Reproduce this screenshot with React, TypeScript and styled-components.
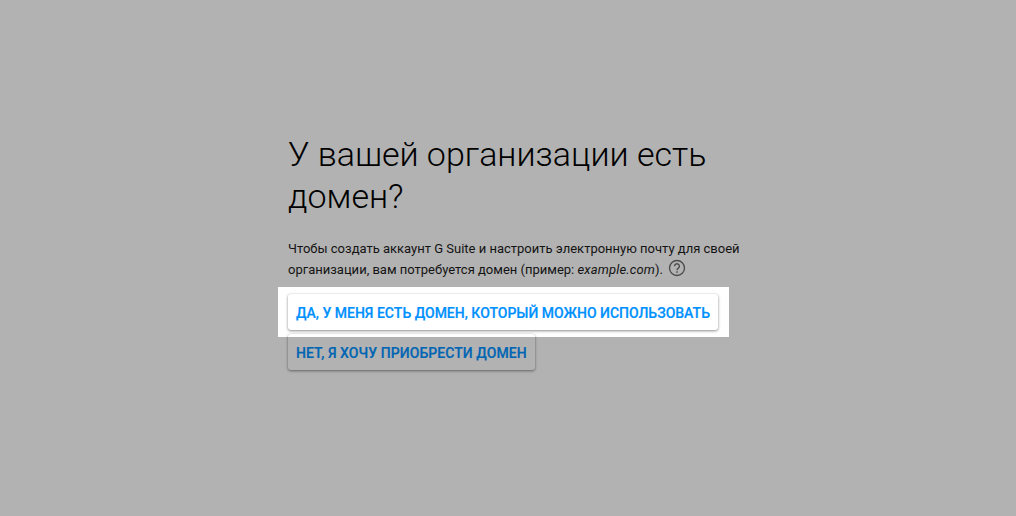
import React from "react";
import styled, { createGlobalStyle } from "styled-components";

const GlobalStyle = createGlobalStyle`
  html, body {
    margin: 0;
    padding: 0;
    background: #fff;
    overflow: hidden;
  }
  body {
    font-family: Roboto, "Liberation Sans", sans-serif;
  }
`;

const Page = styled.div`
  position: relative;
  width: 1016px;
  height: 516px;
  overflow: hidden;
  box-sizing: border-box;
  padding: 133px 0 0 288px;
`;

const Content = styled.main`
  width: 470px;
`;

const Title = styled.h1`
  margin: 0 0 21px;
  font-size: 34px;
  line-height: 42px;
  font-weight: 300;
  color: #000;
`;

const Description = styled.p`
  margin: 0 0 14px;
  font-size: 13px;
  line-height: 21px;
  font-weight: 400;
  color: #1c1c1c;

  em {
    font-style: italic;
    letter-spacing: 0.15px;
  }
`;

const DescriptionLine = styled.span`
  display: flex;
  align-items: center;
  height: 21px;
  white-space: pre;
`;

const HelpIcon = styled.svg`
  width: 18px;
  height: 18px;
  margin-left: 5px;
  margin-top: -4px;
  color: #6e6e6e;
`;

const Actions = styled.div`
  display: flex;
  flex-direction: column;
  align-items: flex-start;
  gap: 4px;
`;

const Highlighted = styled.div`
  position: relative;
`;

// hole in the dimmed layer, the huge shadow dims everything around it
const Spotlight = styled.div`
  position: absolute;
  inset: -7px -11px -7px -10px;
  box-shadow: 0 0 0 1500px rgba(0, 0, 0, 0.3);
  pointer-events: none;
  z-index: 2;
`;

const ActionButton = styled.button<{ $spacing?: string }>`
  display: block;
  height: 36px;
  padding: 1px 8px 0;
  border: 0;
  border-radius: 3px;
  background: #fff;
  color: #0091ff;
  font-family: inherit;
  font-size: 14px;
  font-weight: 500;
  letter-spacing: ${(p) => p.$spacing || "0"};
  -webkit-text-stroke: 0.2px #0091ff;
  text-transform: uppercase;
  white-space: nowrap;
  box-shadow: 0 1px 3px rgba(0, 0, 0, 0.45), 0 0 2px rgba(0, 0, 0, 0.06);
`;

export default function App() {
  return (
    <Page>
      <GlobalStyle />
      <Content>
        <Title>У вашей организации есть домен?</Title>
        <Description>
          <DescriptionLine>
            Чтобы создать аккаунт G Suite и настроить электронную почту для своей
          </DescriptionLine>
          <DescriptionLine>
            организации, вам потребуется домен (пример: <em>example.com</em>).
            <HelpIcon viewBox="0 0 24 24" fill="none">
              <circle cx="12" cy="12" r="10" stroke="currentColor" strokeWidth="1.8" />
              <path
                d="M8.8 9.6a3.2 3.2 0 1 1 5 2.6c-1.1.8-1.8 1.4-1.8 2.8"
                stroke="currentColor"
                strokeWidth="1.8"
              />
              <rect x="11" y="16.4" width="2" height="2" fill="currentColor" />
            </HelpIcon>
          </DescriptionLine>
        </Description>
        <Actions>
          <Highlighted>
            <ActionButton>Да, у меня есть домен, который можно использовать</ActionButton>
            <Spotlight />
          </Highlighted>
          <ActionButton $spacing="0.07px">Нет, я хочу приобрести домен</ActionButton>
        </Actions>
      </Content>
    </Page>
  );
}
